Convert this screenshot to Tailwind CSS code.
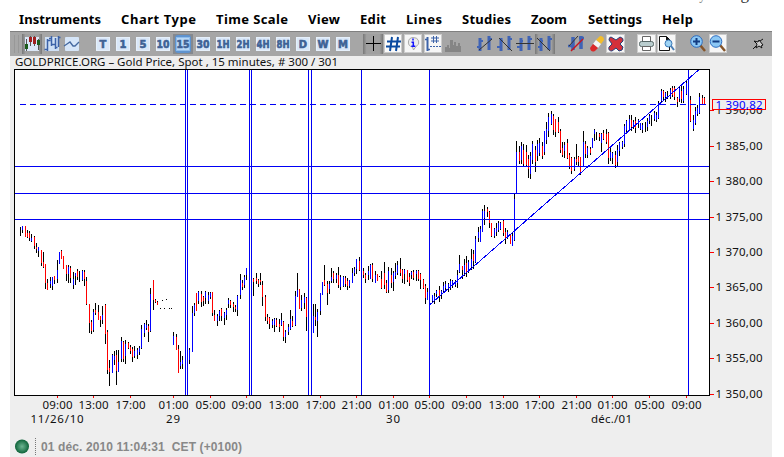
<!DOCTYPE html>
<html lang="en">
<head>
    <meta charset="UTF-8">
    <meta name="viewport" content="width=device-width, initial-scale=1.0">
    <title>GOLDPRICE.ORG - Gold Price</title>
    <script src="https://cdn.jsdelivr.net/npm/@tailwindcss/browser@4"></script>
</head>
<body class="bg-white w-[784px] h-[457px] overflow-hidden font-['Noto_Sans',sans-serif]">
    <div class="relative ml-[10px] w-[762px] h-[457px] flex flex-col">
        <!-- Credit line, cut off by the top edge -->
        <div class="absolute left-[661px] -top-[16px] h-[20px] flex items-end gap-[6px] font-['Liberation_Serif',serif] text-[#777] leading-none">
            <span class="text-[12px] pb-[2px]">Ads by</span>
            <span class="text-[17px] text-[#333] leading-[20px]">Google</span>
        </div>

        <!-- Menu -->
        <nav class="h-[31px] shrink-0 pt-[8px]">
            <svg class="block" width="762" height="23" id="menu" font-family="Noto Sans, sans-serif" font-weight="700" font-size="13"></svg>
        </nav>

        <!-- Toolbar -->
        <div class="h-[25px] shrink-0 bg-[#a6a6a6] border-t border-[#808080] flex items-center pl-[4px]">
            <div class="flex gap-[3px] w-[8px]">
                <div class="w-px h-[18px] bg-[#989898]"></div>
                <div class="w-px h-[18px] bg-[#989898]"></div>
            </div>
            <div class="flex">
                <svg width="20" height="20" viewBox="0 0 20 20">
                    <defs><linearGradient id="pressed"><stop offset="0" stop-color="#777"/><stop offset="0.180" stop-color="#a0a0a0"/><stop offset="0.820" stop-color="#a0a0a0"/><stop offset="1" stop-color="#777"/></linearGradient></defs>
                    <rect width="20" height="20" fill="url(#pressed)"/>
                    <rect x="3" y="3" width="14" height="14" fill="#dbe7f7"/>
                    <path d="M4.500 5v12M8.500 2v10M12.500 2v10M16.500 5v11" stroke="#555"/>
                    <rect x="3" y="10" width="3" height="5" fill="#1c5c1c"/><rect x="7" y="3" width="3" height="5" fill="#a11f1f"/>
                    <rect x="11" y="3" width="3" height="7" fill="#a11f1f"/><rect x="15" y="6" width="3" height="5" fill="#1c5c1c"/>
                </svg>
                <svg width="20" height="20" viewBox="0 0 20 20">
                    <rect x="3" y="3" width="14" height="14" fill="#cfe0f5"/>
                    <path d="M5.500 5v12M2.500 15.500h3M5.500 6.500h3M9.500 2v10M7 4.500h3M9.500 10.500h4M13.500 4v11M13.500 13.500h2M16.500 2v11M16.500 3.500h2" stroke="#3c62a8" stroke-width="1.500" fill="none"/>
                </svg>
                <svg width="20" height="20" viewBox="0 0 20 20">
                    <rect x="3" y="3" width="14" height="14" rx="1" fill="#d5e5f8"/>
                    <path d="M2 12l3-2 3-2 3 4 2 0 4-4" stroke="#44689f" stroke-width="1.300" fill="none"/>
                </svg>
            </div>
            <div class="flex w-[260px] ml-[11px]" id="frames"></div>
            <div class="flex ml-[10px]">
                <svg width="20" height="20" viewBox="0 0 20 20">
                    <rect width="20" height="20" fill="url(#pressed)"/>
                    <path d="M10.500 2v15M3 9.500h15" stroke="#000"/>
                </svg>
                <svg width="20" height="20" viewBox="0 0 20 20">
                    <rect x="1.500" y="0.500" width="17" height="18" fill="#fafafa" stroke="#ccc"/>
                    <path d="M9 3L7 17M15 3l-2 14M4 7.500h14M3 12.500h14" stroke="#0a4aa0" stroke-width="2"/>
                </svg>
                <svg width="20" height="20" viewBox="0 0 20 20">
                    <rect x="1.500" y="0.500" width="17" height="18" fill="#f6f6f6" stroke="#ccc"/>
                    <path d="M10 3.500a5.500 4.800 0 0 1 3 9l-2.500 3.500-1-3A5 4.800 0 0 1 10 3.500z" fill="#ececec" stroke="#aaa"/>
                    <path d="M10 4.500v2M8.500 8.200h1.800v4M8.300 12.300h4" stroke="#11f" stroke-width="1.500" fill="none"/>
                </svg>
                <svg width="20" height="20" viewBox="0 0 20 20">
                    <rect x="1.500" y="0.500" width="17" height="18" fill="#f6f6f6" stroke="#ccc"/>
                    <path d="M4.500 3v14" stroke="#3c62a8" stroke-width="2"/><path d="M2 5.500h3M4 15.500h3" stroke="#3c62a8" stroke-width="1.500"/>
                    <path d="M10.500 2v7M13.500 2v7M8 4h8M8 7h8" stroke="#3c62a8"/>
                    <path d="M7 12.500h11" stroke="#3c62a8" stroke-dasharray="2 1"/>
                </svg>
                <svg width="20" height="20" viewBox="0 0 20 20">
                    <path d="M2 18v-5h2v-2h2v3h1V6h3v5h1V8h2v4h2V9h2v3h1v6z" fill="#858585"/>
                </svg>
            </div>
            <div class="flex ml-[12px]">
                <svg width="20" height="20" viewBox="0 0 20 20">
                    <path d="M5 4v13M14 2v14" stroke="#3f63b5" stroke-width="3"/><path d="M2 13h4M13 5h4M5 7h3" stroke="#3f63b5" stroke-width="2"/>
                    <path d="M4 16L17 5" stroke="#333"/>
                </svg>
                <svg width="20" height="20" viewBox="0 0 20 20">
                    <path d="M6 4v13M14 2v14" stroke="#3f63b5" stroke-width="3"/><path d="M2 13h4M13 5h4M5 7h3" stroke="#3f63b5" stroke-width="2"/>
                    <path d="M4 4L17 17" stroke="#333"/>
                </svg>
                <svg width="20" height="20" viewBox="0 0 20 20">
                    <path d="M6 4v13M14 2v14" stroke="#3f63b5" stroke-width="3"/><path d="M2 13h4M13 5h4M5 7h3" stroke="#3f63b5" stroke-width="2"/>
                    <path d="M1 9.500h18" stroke="#333"/>
                </svg>
                <svg width="20" height="20" viewBox="0 0 20 20">
                    <rect width="20" height="20" fill="url(#pressed)"/>
                    <path d="M6 4v13M14 2v14" stroke="#3f63b5" stroke-width="3"/><path d="M3 13h4M13 5h4M5 7h3" stroke="#3f63b5" stroke-width="2"/>
                    <path d="M2 4L15 17" stroke="#333"/>
                </svg>
            </div>
            <div class="flex ml-[11px]">
                <svg width="20" height="20" viewBox="0 0 20 20">
                    <path d="M7 3v13M15 2v13" stroke="#3f63b5" stroke-width="3.500"/><path d="M2 12h5M13 4h5" stroke="#3f63b5" stroke-width="2.500"/>
                    <path d="M3 12L12 2" stroke="#333"/><path d="M5 17L17 5" stroke="#c8141e" stroke-width="1.500"/>
                </svg>
                <svg width="20" height="20" viewBox="0 0 20 20">
                    <path d="M10 6l4-4q4 0 4 4l-3 4z" fill="#f3bd2c"/><path d="M10 6l5 4-3 4-5-4z" fill="#f5f5f5"/>
                    <path d="M7 10l5 4-3 3q-4 2-5-3z" fill="#dc2a2a"/>
                </svg>
                <svg width="20" height="20" viewBox="0 0 20 20">
                    <rect x="0.500" y="0.500" width="18" height="18" fill="#f6f6f6" stroke="#ccc"/>
                    <path d="M5 3l5 3 4-3q4 1 3 4l-3 3 3 3q0 4-4 4l-3-3-4 3q-4 0-3-4l3-3-3-4q0-3 2-3z" fill="#d4303a" stroke="#24427c" stroke-linejoin="round"/>
                </svg>
            </div>
            <div class="flex ml-[10px]">
                <svg width="20" height="20" viewBox="0 0 20 20">
                    <rect x="1.500" y="0.500" width="18" height="18" fill="#f6f6f6" stroke="#ccc"/>
                    <path d="M6.500 7V2.500h8V7" fill="#fff" stroke="#666"/><rect x="3.500" y="7.500" width="14" height="5" rx="2" fill="#b9cdce" stroke="#566"/>
                    <path d="M6.500 12.500h8v4h-8z" fill="#fff" stroke="#666"/>
                </svg>
                <svg width="20" height="20" viewBox="0 0 20 20">
                    <rect x="1.500" y="0.500" width="18" height="18" fill="#f6f6f6" stroke="#ccc"/>
                    <path d="M3.500 2.500h7l3 3v11h-10z" fill="#fff" stroke="#111"/><path d="M10 2v4h4z" fill="#111"/>
                    <circle cx="12.500" cy="9.500" r="3.500" fill="#9fd4f5" stroke="#3a78b8"/><path d="M15 12l3 4" stroke="#4a7fb5" stroke-width="2"/>
                </svg>
            </div>
            <div class="flex ml-[11px]">
                <svg width="20" height="20" viewBox="0 0 20 20">
                    <path d="M13 11l5 6" stroke="#85552a" stroke-width="2.500"/>
                    <circle cx="9.500" cy="7.500" r="5.800" fill="#8cc8f5" stroke="#2a6cc0"/><path d="M9.500 4v7M6 7.500h7" stroke="#123c82" stroke-width="2"/>
                </svg>
                <svg width="20" height="20" viewBox="0 0 20 20">
                    <rect x="2.500" y="0.500" width="17" height="18" fill="#f6f6f6" stroke="#ccc"/>
                    <path d="M13 11l5 6" stroke="#85552a" stroke-width="2.500"/>
                    <circle cx="9" cy="7.500" r="5.800" fill="#8cc8f5" stroke="#2a6cc0"/><path d="M5.500 7.500h7" stroke="#123c82" stroke-width="2"/>
                </svg>
            </div>
            <svg class="ml-[25px]" width="14" height="14" viewBox="0 0 14 14">
                <path d="M7 3l4 5-2 1 1 2-3-2-3 2 1-4-3-3 4 1z" fill="#ccc" stroke="#111"/><path d="M8 4l3-2M1 12l3-3" stroke="#111"/>
            </svg>
        </div>

        <!-- Chart panel -->
        <main class="grow bg-[#eee] flex flex-col">
            <svg class="block" width="762" height="376" viewBox="10 56 762 376" shape-rendering="crispEdges" font-family="Noto Sans, sans-serif" font-size="11.500" fill="#111">
                <text x="15" y="66" textLength="323" lengthAdjust="spacing">GOLDPRICE.ORG – Gold Price, Spot , 15 minutes, # 300 / 301</text>
                <rect x="14.500" y="69.500" width="695" height="326" fill="#fff" stroke="#000"/>
                <g id="bars"></g>
                <g id="grid" stroke="#0000f5" fill="none">
                    <path d="M15 166.500H709M15 193.500H709M15 219.500H709"/>
                    <path d="M185.500 70V395M187.500 70V395M249.500 70V395M251.500 70V395M308.500 70V395M311.500 70V395M361.500 70V395M429.500 70V395M688.500 70V395"/>
                    <path d="M20 104.500H706" stroke-dasharray="6 4"/>
                    <path d="M429.500 305L698.500 70"/>
                </g>
                <g id="axis"></g>
                <rect x="712.500" y="99.500" width="53" height="10" fill="#eee" stroke="#f00"/>
                <text x="715.500" y="108.500" textLength="47" fill="#00f">1 390,82</text>
            </svg>
            <!-- Status bar -->
            <div class="flex grow items-center pl-[5px] pt-[3px]">
                <svg width="15" height="15" viewBox="0 0 15 15">
                    <defs><radialGradient id="led"><stop offset="0" stop-color="#6db592"/><stop offset="0.600" stop-color="#35855e"/><stop offset="1" stop-color="#0c6238"/></radialGradient></defs>
                    <circle cx="7" cy="7.500" r="7" fill="url(#led)"/>
                </svg>
                <div class="ml-[5px] h-[17px] border-l border-dotted border-[#777]"></div>
                <svg width="210" height="17" font-family="Liberation Sans, sans-serif" font-weight="700" font-size="12" fill="#888">
                    <text x="5" y="13" textLength="201">01 déc. 2010 11:04:31&nbsp; CET (+0100)</text>
                </svg>
            </div>
        </main>
    </div>

    <script>
        // label, x, width
        const menuItems = [
            ["Instruments", 9, 82], ["Chart Type", 111, 75], ["Time Scale", 206, 72], ["View", 298, 32], ["Edit", 350, 26],
            ["Lines", 396, 36], ["Studies", 452, 49], ["Zoom", 521, 36], ["Settings", 578, 54], ["Help", 652, 31]
        ];
        document.getElementById("menu").innerHTML = menuItems.map(([t, x, w]) =>
            `<text x="${x}" y="16" textLength="${w}">${t}</text>`).join("");

        const frames = ["T", "1", "5", "10", "15", "30", "1H", "2H", "4H", "8H", "D", "W", "M"];
        document.getElementById("frames").innerHTML = frames.map(f => `
            <svg width="20" height="20" viewBox="0 0 20 20">
                ${f === "15" ? '<rect width="20" height="20" fill="#85898f"/><rect x="2" y="1" width="16" height="18" rx="3" fill="#5e93cf"/>' : ""}
                <rect x="3.500" y="3.500" width="13" height="13" fill="${f === "15" ? "#b8d8f6" : "#d9e7f8"}" stroke="${f === "15" ? "#8fbdec" : "#e6f0fb"}"/>
                <text x="10" y="14" text-anchor="middle" font-family="DejaVu Sans, sans-serif" font-weight="700" font-size="10"
                    ${f.length > 1 ? 'textLength="13" lengthAdjust="spacingAndGlyphs"' : ""} fill="#3f6295" stroke="#3f6295" stroke-width="0.600">${f}</text>
            </svg>`).join("");

        // x, high, low, body top, body bottom, r(ed) / b(lue)
        const bars = `
20 227 236 0 0 b;22 226 233 226 230 b;25 226 237 226 237 r;27 230 238 233 237 r;29 231 241 233 238 r;31 234 242 238 241 b;34 236 249 237 246 r;36 243 253 247 249 r;38 247 257 247 251 b;41 250 266 250 263 r;43 252 268 262 267 r;45 264 289 264 283 r;47 279 290 283 290 r;50 277 288 281 284 b;52 277 290 277 286 b;54 276 284 276 280 r;57 260 283 270 279 b;59 252 264 252 264 b;61 250 259 251 259 r;63 256 269 256 269 r;66 265 281 265 274 r;68 265 283 267 274 b;70 266 283 268 278 r;73 272 289 279 285 b;75 273 285 273 276 b;77 269 280 271 277 r;79 271 282 0 0 b;82 270 281 271 280 b;84 270 286 272 279 r;86 277 305 281 304 r;89 304 333 304 323 r;91 320 334 322 331 r;93 309 332 312 330 b;95 303 315 310 313 r;98 305 320 312 320 r;100 316 327 316 320 r;102 306 324 315 320 b;105 304 344 305 334 r;107 330 374 332 370 r;109 360 386 368 372 r;112 354 373 355 373 b;114 351 365 356 360 b;116 350 385 355 371 r;118 350 372 362 372 b;121 337 362 341 359 b;123 341 362 342 359 r;125 340 364 344 356 b;128 342 349 343 348 r;130 345 354 347 351 r;132 347 362 349 357 r;134 346 358 351 356 b;137 348 359 350 355 b;139 346 355 348 352 b;141 325 349 329 348 b;144 323 337 324 333 b;146 320 330 325 328 b;148 324 342 326 332 r;150 288 332 294 331 b;153 280 310 280 300 r;155 299 303 300 302 r;157 301 305 302 305 r;160 308 309 0 0 b;162 300 301 0 0 b;164 308 309 0 0 b;166 299 300 0 0 b;169 308 309 0 0 b;171 308 309 0 0 b;173 332 345 336 345 b;176 334 350 337 350 r;178 345 373 349 373 r;180 351 369 362 366 b;182 356 369 360 364 b;
189 348 364 350 360 b;192 306 352 313 352 b;194 303 316 305 313 b;196 293 311 293 311 r;198 291 304 292 301 b;201 291 307 294 302 r;203 296 306 297 301 r;205 291 304 292 298 b;208 292 304 295 301 b;210 292 299 293 297 b;212 292 316 292 313 r;214 310 321 315 321 r;217 314 326 316 321 b;219 310 321 311 316 b;221 308 321 309 316 r;224 312 325 313 318 b;226 308 320 310 315 b;228 298 308 300 304 b;230 300 308 301 305 r;233 302 312 304 307 r;235 305 312 307 309 r;237 295 316 296 310 b;240 274 299 280 295 b;242 280 290 283 287 r;244 275 288 277 285 b;246 268 280 268 275 b;253 278 296 279 282 r;256 273 284 278 281 r;258 279 287 280 284 r;260 273 285 280 282 r;262 281 306 285 297 r;265 295 321 297 317 r;267 314 324 317 321 r;269 317 329 318 324 r;272 319 328 321 325 b;274 318 332 319 325 b;276 318 327 320 326 r;279 319 332 324 327 r;281 313 326 320 325 b;283 321 341 322 337 r;285 330 343 332 337 b;288 324 335 327 332 b;290 310 330 319 329 b;292 316 327 321 326 r;295 291 326 296 325 b;297 273 297 290 297 b;299 289 309 289 309 r;301 295 311 300 308 b;304 293 309 297 303 b;306 297 331 298 317 r;313 304 333 316 333 b;315 304 326 317 320 r;317 309 337 312 321 b;320 293 315 293 311 b;322 282 295 282 295 b;324 265 286 280 285 r;327 281 305 284 293 r;329 281 294 284 289 b;331 268 283 277 281 b;333 271 283 273 279 r;336 273 283 275 279 b;338 267 288 275 285 r;340 275 290 277 287 b;343 276 287 277 286 b;345 276 287 278 284 r;347 278 290 281 286 r;349 280 288 280 286 b;352 268 283 273 283 b;354 267 276 269 273 b;356 259 274 259 269 b;359 257 271 261 270 r;
363 268 278 271 275 r;365 273 283 275 279 r;368 266 280 271 275 b;370 264 279 265 279 b;372 263 282 265 279 r;375 271 283 275 283 b;377 274 281 274 281 r;379 276 277 0 0 b;381 271 289 279 288 r;384 262 289 273 285 r;386 280 293 283 292 r;388 267 293 271 290 b;391 268 288 275 283 r;393 271 291 273 282 b;395 263 279 272 276 b;397 261 275 265 273 b;400 258 276 269 273 r;402 269 283 270 279 r;404 269 284 270 274 b;407 270 282 270 280 r;409 273 286 277 283 r;411 271 279 272 275 b;413 270 280 272 278 r;416 270 281 271 274 b;418 270 281 271 279 r;420 273 289 274 280 r;423 279 289 280 288 r;425 284 304 286 298 r;427 288 300 292 300 b;432 295 303 295 301 b;434 293 304 296 301 b;436 290 297 291 294 b;439 286 302 290 297 r;441 290 299 291 294 b;443 282 293 286 291 b;445 281 292 284 288 b;448 283 292 284 289 b;450 279 290 281 288 b;452 280 288 281 286 b;455 280 287 281 285 b;457 270 288 275 283 b;459 255 273 264 272 b;462 266 279 266 270 r;464 259 276 265 273 b;466 256 277 263 272 r;468 260 273 262 271 b;471 249 270 259 267 b;473 250 269 254 261 r;475 236 263 239 262 b;478 227 242 232 238 b;480 226 242 229 242 b;482 209 232 211 232 b;
484 205 225 211 218 b;487 207 217 209 212 r;489 211 228 212 223 r;491 223 237 223 236 r;494 228 238 229 236 b;496 223 236 228 232 b;498 221 232 223 230 b;500 222 230 223 229 b;503 220 236 221 233 r;505 228 244 232 238 r;507 230 239 232 237 b;510 234 244 234 244 r;512 232 246 236 246 b;514 193 241 199 240 b;516 141 194 152 194 b;519 146 164 152 161 r;521 142 164 146 160 b;523 144 166 150 164 r;526 145 167 152 165 r;528 155 178 159 169 r;530 152 179 156 174 b;532 141 164 144 160 b;535 146 172 150 162 r;537 140 161 144 156 b;539 138 156 143 153 b;542 142 159 146 156 r;544 131 155 131 152 b;546 122 144 129 140 b;548 113 137 117 131 b;551 111 125 114 124 b;553 114 135 116 130 r;555 119 137 119 132 r;558 117 133 122 132 r;560 129 153 131 150 r;562 142 157 148 155 r;564 142 158 145 151 b;567 139 159 143 158 r;569 153 169 155 167 r;571 157 174 158 171 r;574 157 171 159 169 b;576 144 165 159 162 r;578 156 166 157 162 r;580 157 175 157 173 r;583 131 167 142 167 b;585 141 158 144 154 r;587 146 158 148 155 b;590 147 155 149 153 r;592 138 148 138 148 b;594 129 141 130 134 b;596 132 140 0 0 b;599 133 141 134 137 r;601 133 152 134 143 b;603 130 140 133 139 r;606 129 144 134 142 r;608 132 164 133 158 r;610 148 161 152 158 b;612 152 164 153 158 b;615 151 168 155 165 r;617 145 166 150 162 b;619 142 156 143 151 b;622 141 149 142 147 b;624 124 147 126 144 b;626 120 133 121 130 b;629 115 131 119 130 b;631 115 131 120 127 r;633 120 129 122 127 b;635 117 133 121 128 r;638 119 128 120 124 b;
640 123 130 123 129 b;642 123 133 125 130 b;645 122 132 0 0 b;647 118 131 121 127 b;649 114 124 116 121 b;651 115 126 0 0 b;654 111 121 113 119 b;656 112 122 115 120 b;658 101 119 103 118 b;661 89 103 91 101 b;663 90 101 91 97 r;665 92 102 93 97 b;667 91 99 0 0 b;670 88 99 90 97 b;672 86 97 88 95 r;674 86 100 88 97 r;677 97 107 98 102 r;679 86 102 88 99 b;681 86 103 91 99 r;683 86 103 89 101 b;686 80 95 83 94 b;690 96 122 100 121 r;693 115 131 120 129 b;695 107 125 111 123 b;697 105 116 108 114 b;699 93 114 97 113 b;702 95 104 98 104 r;704 97 104 98 104 r`;
        document.getElementById("bars").innerHTML = bars.trim().split(";").map(s => {
            const [x, hi, lo, top, bottom, c] = s.trim().split(" ");
            return `<rect x="${x}" y="${hi}" width="1" height="${lo - hi}" fill="#000"/>
                <rect x="${x}" y="${top}" width="1" height="${bottom - top}" fill="${c === "r" ? "#f00" : "#00f"}"/>`;
        }).join("");

        const times = [[57, "09:00"], [93, "13:00"], [130, "17:00"], [173, "01:00"], [210, "05:00"], [246, "09:00"], [283, "13:00"], [320, "17:00"],
            [356, "21:00"], [393, "01:00"], [429, "05:00"], [466, "09:00"], [503, "13:00"], [539, "17:00"], [576, "21:00"], [612, "01:00"], [649, "05:00"], [686, "09:00"]];
        const days = [[30.5, 53, "11/26/10"], [166, 14, "29"], [386, 14, "30"], [591, 41, "déc./01"]];
        const prices = [[110, "1 390,00"], [146, "1 385,00"], [181, "1 380,00"], [217, "1 375,00"], [252, "1 370,00"], [287, "1 365,00"], [323, "1 360,00"], [358, "1 355,00"], [394, "1 350,00"]];
        let axis = "";
        times.forEach(([x, t]) => {
            axis += `<rect x="${x}" y="396" width="1" height="2" fill="#f00"/><text x="${x - 14.5}" y="409" textLength="30">${t}</text>`;
        });
        days.forEach(([x, w, t]) => {
            axis += `<text x="${x}" y="423" textLength="${w}">${t}</text>`;
        });
        prices.forEach(([y, t]) => {
            axis += `<rect x="710" y="${y}" width="4" height="1" fill="#f00"/><text x="715.500" y="${y + 4}" textLength="47">${t}</text>`;
        });
        document.getElementById("axis").innerHTML = axis;
    </script>
</body>
</html>
